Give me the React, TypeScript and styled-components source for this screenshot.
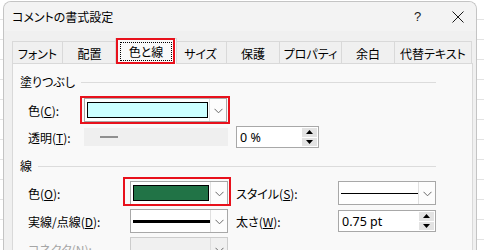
import styled, { createGlobalStyle } from "styled-components";
import { ReactNode } from "react";

const GlobalStyle = createGlobalStyle`
    html, body {
        margin: 0;
        padding: 0;
        overflow: hidden;
    }
    body {
        background-color: #ffffff;
        background-image: repeating-linear-gradient(180deg, transparent 0 19px, #e3e3e3 19px 20px);
        font-family: "Noto Sans CJK JP", "Noto Sans", sans-serif;
        font-feature-settings: "palt";
        font-size: 12px;
        color: #000;
    }
`;

const tabs = [
    { name: "フォント", width: 51 },
    { name: "配置", width: 54 },
    { name: "色と線", width: 58, active: true },
    { name: "サイズ", width: 52 },
    { name: "保護", width: 53 },
    { name: "プロパティ", width: 62 },
    { name: "余白", width: 53 },
    { name: "代替テキスト", width: 77 },
];

const Chevron = () => (
    <svg width="9" height="6" viewBox="0 0 9 6">
        <path d="M0.5 0.8 L4.5 4.8 L8.5 0.8" fill="none" stroke="#6a6a6a" strokeWidth="1" />
    </svg>
);

const Dropdown = ({ width, children, disabled }: { width: number; children?: ReactNode; disabled?: boolean }) => (
    <DropBox $width={width} $disabled={disabled}>
        <DropValue>{children}</DropValue>
        <DropButton $disabled={disabled}>
            <Chevron />
        </DropButton>
    </DropBox>
);

const Spin = ({ width, value }: { width: number; value: string }) => (
    <SpinBox $width={width}>
        <SpinValue>{value}</SpinValue>
        <SpinButtons>
            <SpinArrow>
                <svg width="7" height="4" viewBox="0 0 7 4"><path d="M3.5 0 L7 4 L0 4 Z" fill="#000" /></svg>
            </SpinArrow>
            <SpinArrow>
                <svg width="7" height="4" viewBox="0 0 7 4"><path d="M0 0 L7 0 L3.5 4 Z" fill="#000" /></svg>
            </SpinArrow>
        </SpinButtons>
    </SpinBox>
);

const App = () => {
    return (
        <>
            <GlobalStyle />
            <Window>
                <TitleBar>
                    <Title>コメントの書式設定</Title>
                    <Help>?</Help>
                    <Close>
                        <svg width="12" height="12" viewBox="0 0 12 12">
                            <path d="M0.5 0.5 L11.5 11.5 M11.5 0.5 L0.5 11.5" stroke="#1a1a1a" strokeWidth="1" />
                        </svg>
                    </Close>
                </TitleBar>
                <Body>
                    <TabStrip>
                        {tabs.map(({ name, width, active }) => (
                            <Tab key={name} $width={width} $active={active}>
                                {active ? (
                                    <>
                                        <Focus>{name}</Focus>
                                        <Highlight $top={-1} $left={0} $right={1} $bottom={0} />
                                    </>
                                ) : name}
                            </Tab>
                        ))}
                    </TabStrip>
                    <Panel>
                        <SectionHeader>
                            <span>塗りつぶし</span>
                            <Rule />
                        </SectionHeader>
                        <FormRow $height={28} $top={5}>
                            <Label $width={56}>色(<u>C</u>):</Label>
                            <Field>
                                <Dropdown width={143}>
                                    <Swatch $color="#ccffff" $width={121} />
                                </Dropdown>
                                <Highlight $top={-2} $left={-4} $right={-3} $bottom={-2} />
                            </Field>
                        </FormRow>
                        <FormRow $height={24} $top={1}>
                            <Label $width={56}>透明(<u>T</u>):</Label>
                            <Field>
                                <Slider>
                                    <SliderThumb />
                                </Slider>
                            </Field>
                            <Field>
                                <Spin width={83} value="0 %" />
                            </Field>
                        </FormRow>

                        <SectionHeader $top={6}>
                            <span>線</span>
                            <Rule />
                        </SectionHeader>
                        <FormRow $height={28} $top={4}>
                            <Label $width={102}>色(<u>O</u>):</Label>
                            <Field>
                                <Dropdown width={98}>
                                    <Swatch $color="#217346" $width={76} />
                                </Dropdown>
                                <Highlight $top={-4} $left={-7} $right={-3} $bottom={-1} />
                            </Field>
                            <Label $width={102}>スタイル(<u>S</u>):</Label>
                            <Field>
                                <Dropdown width={98}>
                                    <Stroke $weight={1} />
                                </Dropdown>
                            </Field>
                        </FormRow>
                        <FormRow $height={28}>
                            <Label $width={102}>実線/点線(<u>D</u>):</Label>
                            <Field>
                                <Dropdown width={98}>
                                    <Stroke $weight={3} />
                                </Dropdown>
                            </Field>
                            <Label $width={102}>太さ(<u>W</u>):</Label>
                            <Field>
                                <Spin width={98} value="0.75 pt" />
                            </Field>
                        </FormRow>
                        <FormRow $height={28}>
                            <Label $width={102} $disabled>コネクタ(<u>N</u>):</Label>
                            <Field>
                                <Dropdown width={98} disabled />
                            </Field>
                        </FormRow>
                    </Panel>
                </Body>
            </Window>
        </>
    );
};

const Window = styled.div`
    margin: 1px 0 0 3px;
    width: 474px;
    height: 260px;
    box-sizing: border-box;
    background: #f0f0f0;
    border: 1px solid #c4c4c4;
    border-bottom: none;
    border-radius: 8px 8px 0 0;
    overflow: hidden;
`;

const TitleBar = styled.div`
    height: 29px;
    display: flex;
    align-items: center;
    padding-left: 8px;
    background: #f3f3f3;
`;

const Title = styled.div`
    flex: 1;
    font-size: 12px;
    padding-bottom: 1px;
`;

const Help = styled.div`
    width: 14px;
    font-family: "Liberation Sans", sans-serif;
    font-size: 13px;
    color: #1a1a1a;
    margin-right: 24px;
`;

const Close = styled.div`
    width: 12px;
    height: 12px;
    display: flex;
    margin-right: 12px;
`;

const Body = styled.div`
    padding: 0 2px 0 8px;
`;

const TabStrip = styled.div`
    height: 32px;
    display: flex;
    align-items: flex-end;
`;

const Tab = styled.div<{ $width: number; $active?: boolean }>`
    position: relative;
    box-sizing: border-box;
    width: ${p => p.$width + (p.$active ? 4 : 0)}px;
    height: ${p => (p.$active ? 26 : 22)}px;
    margin: ${p => (p.$active ? "0 -2px -1px -2px" : "0")};
    z-index: ${p => (p.$active ? 2 : 1)};
    display: flex;
    align-items: center;
    justify-content: center;
    padding-top: ${p => (p.$active ? 0 : 1)}px;
    background: ${p => (p.$active ? "#f9f9f9" : "#f0f0f0")};
    border: 1px solid #d9d9d9;
    border-bottom: none;
    border-left-width: ${p => (p.$active ? 1 : 0)}px;
    &:first-child {
        border-left-width: 1px;
    }
    font-size: 12px;
`;

const Focus = styled.span`
    border: 1px dotted #000;
    padding: 1px 8px 1px 8px;
    line-height: 15px;
`;

const Highlight = styled.div<{ $top: number; $left: number; $right: number; $bottom: number }>`
    position: absolute;
    top: ${p => p.$top}px;
    left: ${p => p.$left}px;
    right: ${p => p.$right}px;
    bottom: ${p => p.$bottom}px;
    border: 2px solid #e8111c;
    pointer-events: none;
`;

const Panel = styled.div`
    box-sizing: border-box;
    width: 461px;
    height: 200px;
    background: #f9f9f9;
    border: 1px solid #d9d9d9;
    padding: 7px 36px 0 0;
`;

const SectionHeader = styled.div<{ $top?: number }>`
    height: 20px;
    display: flex;
    align-items: center;
    gap: 6px;
    padding-left: 7px;
    margin-top: ${p => p.$top ?? 0}px;
`;

const Rule = styled.div`
    flex: 1;
    height: 1px;
    background: #dcdcdc;
    margin-top: 2px;
`;

const FormRow = styled.div<{ $height: number; $top?: number }>`
    height: ${p => p.$height}px;
    margin-top: ${p => p.$top ?? 0}px;
    display: flex;
    align-items: center;
    padding-left: 15px;
`;

const Label = styled.div<{ $width: number; $disabled?: boolean }>`
    width: ${p => p.$width}px;
    flex-shrink: 0;
    color: ${p => (p.$disabled ? "#a6a6a6" : "#000")};
    font-size: 12px;
    u {
        text-underline-offset: 1px;
    }
`;

const Field = styled.div`
    position: relative;
    display: flex;
    margin-right: 8px;
    flex-shrink: 0;
`;

const DropBox = styled.div<{ $width: number; $disabled?: boolean }>`
    box-sizing: border-box;
    width: ${p => p.$width}px;
    height: 24px;
    display: flex;
    background: ${p => (p.$disabled ? "#f0f0f0" : "#ffffff")};
    border: 1px solid ${p => (p.$disabled ? "#cccccc" : "#a8a8a8")};
`;

const DropValue = styled.div`
    flex: 1;
    display: flex;
    align-items: center;
    padding-left: 2px;
    min-width: 0;
`;

const DropButton = styled.div<{ $disabled?: boolean }>`
    width: 16px;
    display: flex;
    align-items: center;
    justify-content: center;
    border-left: 1px solid ${p => (p.$disabled ? "#dddddd" : "#e0e0e0")};
    background: ${p => (p.$disabled ? "#f0f0f0" : "#fdfdfd")};
    padding-top: 1px;
`;

const Swatch = styled.div<{ $color: string; $width: number }>`
    box-sizing: border-box;
    width: ${p => p.$width}px;
    height: 16px;
    background: ${p => p.$color};
    border: 1px solid #000;
`;

const Stroke = styled.div<{ $weight: number }>`
    width: 78px;
    height: ${p => p.$weight}px;
    background: #000;
`;

const Slider = styled.div`
    width: 144px;
    height: 18px;
    background: #efefef;
    display: flex;
    align-items: center;
    padding-left: 16px;
    box-sizing: border-box;
`;

const SliderThumb = styled.div`
    width: 18px;
    height: 2px;
    background: #8f8f8f;
`;

const SpinBox = styled.div<{ $width: number }>`
    box-sizing: border-box;
    width: ${p => p.$width}px;
    height: 22px;
    display: flex;
    background: #fff;
    border: 1px solid #a8a8a8;
`;

const SpinValue = styled.div`
    flex: 1;
    display: flex;
    align-items: center;
    padding-left: 3px;
    font-family: "Noto Sans", sans-serif;
    font-size: 12.5px;
`;

const SpinButtons = styled.div`
    width: 15px;
    display: flex;
    flex-direction: column;
    padding: 1px 1px 1px 0;
    gap: 1px;
`;

const SpinArrow = styled.div`
    flex: 1;
    display: flex;
    align-items: center;
    justify-content: center;
    background: #e3e3e3;
`;

export default App;
